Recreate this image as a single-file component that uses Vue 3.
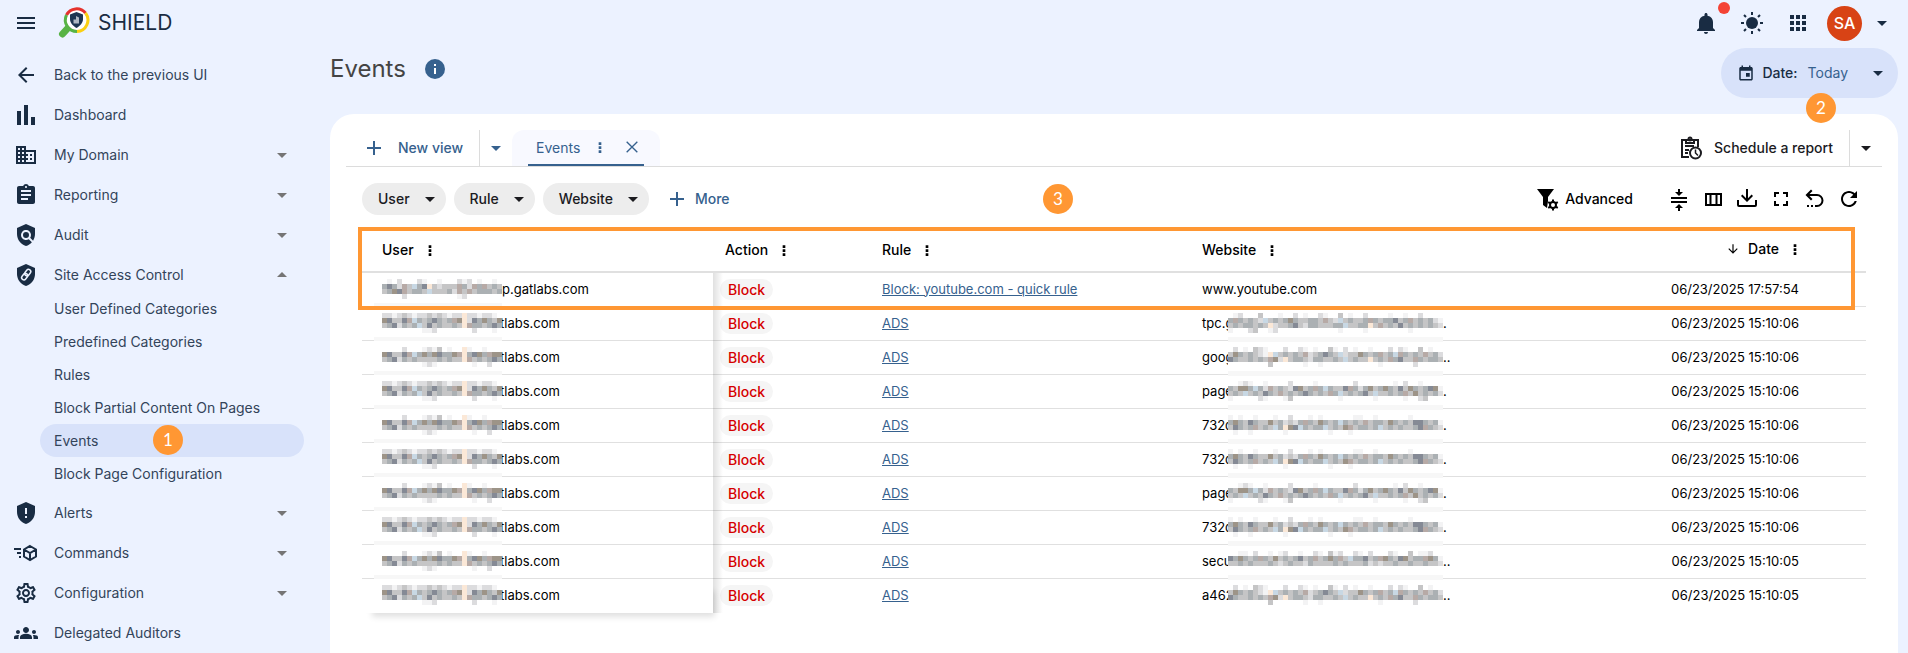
<template>
  <div class="page">
    <header class="topbar">
      <button class="icon-btn menu-btn" aria-label="Menu">
        <svg viewBox="0 0 24 24"><path :d="icons.menu" /></svg>
      </button>
      <a href="#" class="brand">
        <svg class="logo" viewBox="0 0 32 32" fill="none">
          <path d="M10 21L4.5 27" stroke="#57b345" stroke-width="7" stroke-linecap="round" />
          <circle cx="18.5" cy="13" r="11" fill="#fff" />
          <path d="M8.5 8A11.5 11.5 0 0 1 27.5 6" stroke="#e5322d" stroke-width="3" />
          <path d="M27.5 6A11.5 11.5 0 0 1 19 24.5" stroke="#fbd012" stroke-width="3" />
          <path d="M19 24.5A11.5 11.5 0 0 1 8.5 8" stroke="#57b345" stroke-width="3" />
          <path
            d="M18.5 5l6.5 2.5v4.500c0 4-3 7-6.5 9-3.500-2-6.500-5-6.500-9V7.500z"
            fill="#1c3550"
          />
          <path d="M15.500 16.500v-4H18V9l3 1.500v6z" fill="#aeb8c3" />
        </svg>
        <span>SHIELD</span>
      </a>
      <div class="account">
        <button class="icon-btn bell" aria-label="Notifications">
          <svg viewBox="0 0 24 24"><path :d="icons.bell" /></svg>
          <i class="dot"></i>
        </button>
        <button class="icon-btn" aria-label="Theme">
          <svg viewBox="0 0 24 24">
            <circle cx="12" cy="12" r="6" />
            <path
              d="M12 1v3M12 20v3M1 12h3M20 12h3M4 4l2 2M18 18l2 2M4 20l2-2M18 6l2-2"
              stroke="#192c43"
              stroke-width="2"
            />
          </svg>
        </button>
        <button class="icon-btn" aria-label="Apps">
          <svg viewBox="0 0 24 24"><path :d="icons.apps" /></svg>
        </button>
        <button class="profile" aria-label="Account">
          <span class="avatar">SA</span>
          <svg viewBox="0 0 24 24"><path :d="icons.down" /></svg>
        </button>
      </div>
    </header>

    <div class="body">
      <nav class="sidebar">
        <ul>
          <li v-for="item in menu" :key="item.label">
            <a href="#" class="item">
              <svg v-if="item.icon === 'link'" class="item-icon" viewBox="0 0 24 24">
                <path :d="icons.shield" />
                <g fill="none" stroke="#ecf2ff" stroke-width="1.5" transform="rotate(-52 12 11.5)">
                  <rect x="6" y="9.5" width="7" height="4.5" rx="2.25" />
                  <rect x="11" y="9.5" width="7" height="4.5" rx="2.25" />
                </g>
              </svg>
              <svg v-else-if="item.icon === 'commands'" class="item-icon" viewBox="0 0 24 24">
                <g fill="none" stroke="#192c43" stroke-width="2">
                  <path d="M0 8h7M3 12h4M5 16h2" />
                  <path d="M16 5l6 3.5v7L16 19l-6-3.5v-7zM10 8.5l6 3.5 6-3.5M16 12v7" />
                </g>
              </svg>
              <svg v-else class="item-icon" viewBox="0 0 24 24">
                <path fill-rule="evenodd" :d="icons[item.icon]" />
              </svg>
              <span>{{ item.label }}</span>
              <svg v-if="item.arrow" class="item-arrow" viewBox="0 0 24 24">
                <path :d="icons[item.arrow]" />
              </svg>
            </a>
            <ul v-if="item.children" class="sub">
              <li v-for="child in item.children" :key="child">
                <a href="#" :class="{ active: child === 'Events' }">
                  {{ child }}
                  <span v-if="child === 'Events'" class="badge badge-one">1</span>
                </a>
              </li>
            </ul>
          </li>
        </ul>
      </nav>

      <main>
        <div class="heading">
          <h1>Events</h1>
          <svg class="info" viewBox="0 0 20 20">
            <circle cx="10" cy="10" r="10" />
            <path d="M9 5h2v2H9zM9 9h2v6H9z" fill="#fff" />
          </svg>
          <button class="date-btn">
            <svg class="calendar" viewBox="0 0 24 24"><path :d="icons.calendar" /></svg>
            <span>Date:</span>
            <span class="today">Today</span>
            <svg class="caret" viewBox="0 0 24 24"><path :d="icons.down" /></svg>
          </button>
          <span class="badge badge-two">2</span>
        </div>

        <section class="card">
          <div class="tabs">
            <button class="new-view">
              <svg viewBox="0 0 24 24"><path :d="icons.plus" /></svg>
              New view
            </button>
            <button class="split" aria-label="Saved views">
              <svg viewBox="0 0 24 24"><path :d="icons.down" /></svg>
            </button>
            <div class="tab">
              <div class="tab-inner">
                <span>Events</span>
                <button aria-label="Tab options">
                  <svg viewBox="0 0 24 24"><path :d="icons.dots" /></svg>
                </button>
                <button aria-label="Close tab">
                  <svg viewBox="0 0 24 24">
                    <path d="M4 4l16 16M20 4L4 20" stroke="#36618e" stroke-width="2" />
                  </svg>
                </button>
              </div>
            </div>
            <button class="schedule">
              <svg viewBox="0 0 24 24" fill="none" stroke="#1b1b1f" stroke-width="2">
                <path d="M11 21H4V4h16v7M8 4v3h8V4M7 10h9M7 14h4M7 17h3" />
                <circle cx="12" cy="3" r="1.5" />
                <circle cx="17.5" cy="17" r="5.5" fill="#fff" />
                <path d="M17.500 13.500V17l2.500 2.500" stroke-width="1.5" />
              </svg>
              Schedule a report
            </button>
            <button class="split split-dark" aria-label="Report options">
              <svg viewBox="0 0 24 24"><path :d="icons.down" /></svg>
            </button>
          </div>

          <div class="filters">
            <button v-for="chip in chips" :key="chip" class="chip">
              {{ chip }}
              <svg viewBox="0 0 24 24"><path :d="icons.down" /></svg>
            </button>
            <button class="more">
              <svg viewBox="0 0 24 24"><path :d="icons.plus" /></svg>
              More
            </button>
            <div class="tools">
              <button class="advanced">
                <svg viewBox="0 0 24 24">
                  <path d="M2 2h17l-6 8v4l-1 7-4-3v-8z" />
                  <circle cx="18" cy="18" r="5" fill="#fff" />
                  <circle cx="18" cy="18" r="3" fill="none" stroke="#000" stroke-width="2" />
                  <path
                    d="M18 12.500v2M18 21.500v2M13.200 15.200l1.800 1M21 19.800l1.800 1M13.200 20.800l1.800-1M21 16.200l1.800-1"
                    stroke="#000"
                    stroke-width="2"
                  />
                </svg>
                Advanced
              </button>
              <button v-for="tool in tools" :key="tool.name" :aria-label="tool.name">
                <svg viewBox="0 0 24 24"><path fill-rule="evenodd" :d="tool.path" /></svg>
              </button>
            </div>
            <span class="badge badge-three">3</span>
          </div>

          <div class="table-wrap">
            <table>
              <colgroup>
                <col class="col-user" />
                <col class="col-action" />
                <col class="col-rule" />
                <col />
                <col class="col-date" />
              </colgroup>
              <thead>
                <tr>
                  <th v-for="name in columns" :key="name">
                    <span class="th">
                      <svg v-if="name === 'Date'" class="sort" viewBox="0 0 24 24">
                        <path :d="icons.sort" />
                      </svg>
                      {{ name }}
                      <svg class="th-dots" viewBox="0 0 24 24"><path :d="icons.dots" /></svg>
                    </span>
                  </th>
                </tr>
              </thead>
              <tbody>
                <tr v-for="(row, i) in rows" :key="i">
                  <td class="user">
                    <div class="cell">
                      <svg class="mosaic" width="120" height="20" shape-rendering="crispEdges">
                        <rect
                          v-for="b in blocks(userMasks[i === 0 ? 0 : 1 + (i % 2)])"
                          :key="b.key"
                          :x="b.x"
                          :y="b.y"
                          width="5"
                          height="5"
                          :fill="b.fill"
                        />
                      </svg>
                      <span>{{ row.user }}</span>
                    </div>
                  </td>
                  <td><span class="block">Block</span></td>
                  <td><a href="#" class="rule">{{ row.rule }}</a></td>
                  <td :class="{ site: row.tail }">
                    <div class="cell">
                      <span :class="{ lead: row.tail }">{{ row.site }}</span>
                      <svg
                        v-if="row.tail"
                        class="mosaic"
                        width="215"
                        height="20"
                        shape-rendering="crispEdges"
                      >
                        <rect
                          v-for="b in blocks(siteMasks[row.mask])"
                          :key="b.key"
                          :x="b.x"
                          :y="b.y"
                          width="5"
                          height="5"
                          :fill="b.fill"
                        />
                      </svg>
                      <span>{{ row.tail }}</span>
                    </div>
                  </td>
                  <td>{{ row.date }}</td>
                </tr>
              </tbody>
            </table>
            <div class="highlight"></div>
          </div>
        </section>
      </main>
    </div>
  </div>
</template>

<script setup>
const icons = {
  menu: "M3 18h18v-2H3v2zm0-5h18v-2H3v2zm0-7v2h18V6H3z",
  back: "M20 11H7.830l5.590-5.590L12 4l-8 8 8 8 1.410-1.410L7.830 13H20v-2z",
  chart: "M3 8h4v14H3zM10 2h4v20h-4zM17 14h4v8h-4z",
  domain:
    "M12 7V3H2v18h20V7H12zM6 19H4v-2h2v2zm0-4H4v-2h2v2zm0-4H4V9h2v2zm0-4H4V5h2v2zm4 12H8v-2h2v2zm0-4H8v-2h2v2zm0-4H8V9h2v2zm0-4H8V5h2v2zm10 12h-8v-2h2v-2h-2v-2h2v-2h-2V9h8v10zm-2-8h-2v2h2v-2zm0 4h-2v2h2v-2z",
  report:
    "M19 3h-4.180C14.400 1.840 13.300 1 12 1c-1.300 0-2.400.84-2.820 2H5c-1.100 0-2 .9-2 2v14c0 1.100.9 2 2 2h14c1.100 0 2-.9 2-2V5c0-1.100-.9-2-2-2zm-7 0c.55 0 1 .45 1 1s-.45 1-1 1-1-.45-1-1 .45-1 1-1zm2 14H7v-2h7v2zm3-4H7v-2h10v2zm0-4H7V7h10v2z",
  audit:
    "M21 5l-9-4-9 4v6c0 5.550 3.840 10.740 9 12 2.300-.56 4.330-1.900 5.880-3.710l-3.120-3.120c-1.940 1.290-4.580 1.070-6.290-.64-1.950-1.950-1.950-5.120 0-7.070 1.950-1.950 5.120-1.950 7.070 0 1.710 1.710 1.920 4.350.64 6.290l2.900 2.900C20.290 15.690 21 13.380 21 11V5zM12 9a3 3 0 1 0 0 6 3 3 0 0 0 0-6z",
  shield: "M12 1L3 5v6c0 5.550 3.840 10.740 9 12 5.160-1.260 9-6.450 9-12V5l-9-4z",
  alert:
    "M12 1L3 5v6c0 5.550 3.840 10.740 9 12 5.160-1.260 9-6.450 9-12V5l-9-4zM11 7h2v6h-2zM11 15h2v2h-2z",
  settings:
    "M19.430 12.980c.04-.32.07-.64.07-.98 0-.34-.03-.66-.07-.98l2.110-1.650c.19-.15.24-.42.12-.64l-2-3.460c-.09-.16-.26-.25-.44-.25-.06 0-.12.01-.17.03l-2.490 1c-.52-.4-1.080-.73-1.690-.98l-.38-2.650C14.460 2.180 14.250 2 14 2h-4c-.25 0-.46.18-.49.42l-.38 2.650c-.61.25-1.170.59-1.690.98l-2.490-1c-.06-.02-.12-.03-.18-.03-.17 0-.34.09-.43.25l-2 3.460c-.13.22-.07.49.12.64l2.110 1.650c-.04.32-.07.65-.07.98 0 .33.03.66.07.98l-2.110 1.650c-.19.15-.24.42-.12.64l2 3.460c.09.16.26.25.44.25.06 0 .12-.01.17-.03l2.490-1c.52.4 1.080.73 1.690.98l.38 2.650c.03.24.24.42.49.42h4c.25 0 .46-.18.49-.42l.38-2.650c.61-.25 1.170-.59 1.690-.98l2.490 1c.06.02.12.03.18.03.17 0 .34-.09.43-.25l2-3.460c.12-.22.07-.49-.12-.64l-2.110-1.650zm-1.980-1.710c.04.31.05.52.05.73 0 .21-.02.43-.05.73l-.14 1.130.89.7 1.080.84-.7 1.210-1.270-.51-1.040-.42-.9.68c-.43.32-.84.56-1.250.73l-1.060.43-.16 1.130-.2 1.350h-1.400l-.19-1.350-.16-1.130-1.060-.43c-.43-.18-.83-.41-1.230-.71l-.91-.7-1.060.43-1.270.51-.7-1.210 1.080-.84.89-.7-.14-1.130c-.03-.31-.05-.54-.05-.74s.02-.43.05-.73l.14-1.130-.89-.7-1.080-.84.7-1.210 1.270.51 1.040.42.9-.68c.43-.32.84-.56 1.250-.73l1.060-.43.16-1.130.2-1.350h1.390l.19 1.350.16 1.130 1.060.43c.43.18.83.41 1.230.71l.91.7 1.060-.43 1.270-.51.7 1.210-1.070.85-.89.7.14 1.130zM12 8c-2.210 0-4 1.790-4 4s1.790 4 4 4 4-1.790 4-4-1.790-4-4-4zm0 6c-1.100 0-2-.9-2-2s.9-2 2-2 2 .9 2 2-.9 2-2 2z",
  people:
    "M12 12.750c1.630 0 3.070.39 4.240.9 1.080.48 1.760 1.560 1.760 2.730V18H6v-1.610c0-1.180.68-2.260 1.760-2.730 1.170-.52 2.610-.91 4.240-.91zM4 13c1.100 0 2-.9 2-2s-.9-2-2-2-2 .9-2 2 .9 2 2 2zm1.130 1.100c-.37-.06-.74-.1-1.130-.1-.99 0-1.930.21-2.780.58C.48 14.900 0 15.620 0 16.430V18h4.500v-1.610c0-.83.23-1.610.63-2.290zM20 13c1.100 0 2-.9 2-2s-.9-2-2-2-2 .9-2 2 .9 2 2 2zm4 3.430c0-.81-.48-1.530-1.220-1.850-.85-.37-1.790-.58-2.780-.58-.39 0-.76.04-1.130.1.4.68.63 1.460.63 2.290V18H24v-1.570zM12 6c1.660 0 3 1.340 3 3s-1.340 3-3 3-3-1.340-3-3 1.340-3 3-3z",
  bell: "M12 23c1.100 0 2-.9 2-2h-4c0 1.100.89 2 2 2zm7-6v-6c0-3.070-1.900-5.640-5.500-6.320V3.500c0-.83-.67-1.500-1.500-1.500s-1.500.67-1.500 1.500v1.180C6.900 5.360 5 7.920 5 11v6l-2 2v1h18v-1l-2-2z",
  apps: "M4 4h4v4H4zM10 4h4v4h-4zM16 4h4v4h-4zM4 10h4v4H4zM10 10h4v4h-4zM16 10h4v4h-4zM4 16h4v4H4zM10 16h4v4h-4zM16 16h4v4h-4z",
  calendar:
    "M19 4h-1V2h-2v2H8V2H6v2H5c-1.110 0-2 .9-2 2v14c0 1.100.89 2 2 2h14c1.100 0 2-.9 2-2V6c0-1.100-.9-2-2-2zm0 16H5V9h14v11zM12 12h5v5h-5z",
  plus: "M19 13h-6v6h-2v-6H5v-2h6V5h2v6h6v2z",
  dots: "M10 5h4v4h-4zM10 11h4v4h-4zM10 17h4v4h-4z",
  sort: "M20 12l-1.410-1.410L13 16.170V4h-2v12.170l-5.580-5.590L4 12l8 8 8-8z",
  down: "M7 10l5 5 5-5z",
  up: "M7 14l5-5 5 5z",
};

const menu = [
  { icon: "back", label: "Back to the previous UI" },
  { icon: "chart", label: "Dashboard" },
  { icon: "domain", label: "My Domain", arrow: "down" },
  { icon: "report", label: "Reporting", arrow: "down" },
  { icon: "audit", label: "Audit", arrow: "down" },
  {
    icon: "link",
    label: "Site Access Control",
    arrow: "up",
    children: [
      "User Defined Categories",
      "Predefined Categories",
      "Rules",
      "Block Partial Content On Pages",
      "Events",
      "Block Page Configuration",
    ],
  },
  { icon: "alert", label: "Alerts", arrow: "down" },
  { icon: "commands", label: "Commands", arrow: "down" },
  { icon: "settings", label: "Configuration", arrow: "down" },
  { icon: "people", label: "Delegated Auditors" },
];

const chips = ["User", "Rule", "Website"];

const tools = [
  {
    name: "Density",
    path: "M4 10h16v2H4zM4 14h16v2H4zM11 2h2v3h3l-4 4-4-4h3zM11 24h2v-3h3l-4-4-4 4h3z",
  },
  {
    name: "Columns",
    path: "M4 6h17v13H4zM6 8v9h2.500V8zM10.500 8v9h4V8zM16.500 8v9H19V8z",
  },
  {
    name: "Download",
    path: "M11 2h2v9.200l3.600-3.600L18 9l-6 6-6-6 1.400-1.400 3.600 3.600zM2 13h2v5h16v-5h2v5a2 2 0 0 1-2 2H4a2 2 0 0 1-2-2z",
  },
  {
    name: "Fullscreen",
    path: "M5 5h5v2H7v3H5zM14 5h5v5h-2V7h-3zM5 14h2v3h3v2H5zM17 14h2v5h-5v-2h3z",
  },
  {
    name: "Undo",
    path: "M8 2.500L9.500 4 6.500 7H14a6.500 6.500 0 0 1 0 13h-2v-2h2a4.500 4.500 0 0 0 0-9H6.500l3 3L8 13.500 2.500 8zM4 18h2v2H4zM8 18h2v2H8z",
  },
  {
    name: "Refresh",
    path: "M17.650 6.350C16.200 4.900 14.210 4 12 4c-4.420 0-7.990 3.580-7.990 8s3.570 8 7.990 8c3.730 0 6.840-2.550 7.730-6h-2.080c-.82 2.330-3.040 4-5.650 4-3.310 0-6-2.690-6-6s2.690-6 6-6c1.660 0 3.140.69 4.220 1.780L13 11h7V4l-2.350 2.350z",
  },
];

const columns = ["User", "Action", "Rule", "Website", "Date"];

const early = "06/23/2025 15:10:05";
const late = "06/23/2025 15:10:06";

const rows = [
  {
    user: "p.gatlabs.com",
    rule: "Block: youtube.com - quick rule",
    site: "www.youtube.com",
    date: "06/23/2025 17:57:54",
  },
  { user: "tlabs.com", rule: "ADS", site: "tpc.g", tail: ".", mask: 0, date: late },
  { user: "tlabs.com", rule: "ADS", site: "goog", tail: "..", mask: 1, date: late },
  { user: "tlabs.com", rule: "ADS", site: "page", tail: ".", mask: 2, date: late },
  { user: "tlabs.com", rule: "ADS", site: "732d", tail: ".", mask: 3, date: late },
  { user: "tlabs.com", rule: "ADS", site: "732d", tail: ".", mask: 3, date: late },
  { user: "tlabs.com", rule: "ADS", site: "page", tail: ".", mask: 2, date: late },
  { user: "tlabs.com", rule: "ADS", site: "732d", tail: ".", mask: 3, date: late },
  { user: "tlabs.com", rule: "ADS", site: "secu", tail: "..", mask: 4, date: early },
  { user: "tlabs.com", rule: "ADS", site: "a462", tail: "..", mask: 1, date: early },
];

// one digit per 5px block, 0 stays empty
const palette = [
  "",
  "#f3f3f4",
  "#dcdcde",
  "#c5c5c6",
  "#abb0b3",
  "#858a95",
  "#9d9488",
  "#fbe8d7",
  "#c8d8e4",
  "#b7aaa6",
];

const userMasks = [
  ["010200021001000212010010", "454293845732333942949343", "346593443833342939344434", "000020000000000120000000"],
  ["000020001213010071001000", "653359846465446974564966", "345243433334343379343454", "000000001210000000100200"],
  ["221232122323212272212210", "653359843454349672546436", "345243483534334379443454", "000000001120000000200010"],
];

const siteMasks = [
  [
    "0120003000100201002100301002000010010020000",
    "4943432834346433443932834334943445349343421",
    "3434434372334532443334483344739343534343432",
    "1000230012000000000000100001000000001000000",
  ],
  [
    "0201032100020021010031020100100020210030100",
    "3643432178343439234543823364349348943439342",
    "5433434396273443244334383433734394533943443",
    "0000000030000001001000000000001000000200000",
  ],
  [
    "0012100100002000010000000200000001020010000",
    "4366484293432563494843359424634643536434561",
    "3438343543934345434394834345383343493634342",
    "1000002100013000000000100000010000010023000",
  ],
  [
    "1010010001002000101000000110010000001000000",
    "4643543363423249436434843439344364343554341",
    "3543493438476584344834369344348343433459432",
    "0100100000010000000010001000000000000000000",
  ],
  [
    "0011020010120010021031200210200021003011200",
    "5464349436343453493464938445349643563449641",
    "3343433343234332433334343334232334334334332",
    "0000000000000000000000000000000000000000000",
  ],
];

const blocks = (mask) =>
  mask.flatMap((line, y) =>
    [...line]
      .map((n, x) => ({ key: `${x}-${y}`, x: x * 5, y: y * 5, fill: palette[n] }))
      .filter((b) => b.fill)
  );
</script>

<style>
body {
  margin: 0;
  background-color: #ecf2ff;
}
</style>

<style scoped>
.page {
  display: flex;
  flex-direction: column;
  min-height: 100vh;
  font-family: Inter, "Liberation Sans", sans-serif;
  font-size: 14px;
  line-height: 20px;
  color: #192c43;
  background-color: #ecf2ff;
}

ul {
  margin: 0;
  padding: 0;
  list-style: none;
}

a {
  color: inherit;
  text-decoration: none;
}

svg {
  width: 24px;
  height: 24px;
  flex: none;
  fill: currentColor;
}

svg[fill="none"] {
  fill: none;
}

button {
  display: flex;
  align-items: center;
  padding: 0;
  border: 0;
  background: none;
  color: inherit;
  font: inherit;
  cursor: pointer;
}

.topbar {
  display: flex;
  align-items: center;
  height: 46px;
  padding: 0 14px;
}

.brand {
  display: flex;
  align-items: center;
  gap: 8px;
  margin-left: 20px;
  font-size: 21px;
  line-height: 24px;
}

.brand .logo {
  width: 32px;
  height: 32px;
}

.account {
  display: flex;
  align-items: center;
  gap: 22px;
  margin-left: auto;
}

.bell {
  position: relative;
}

.dot {
  position: absolute;
  top: -9px;
  right: -12px;
  width: 12px;
  height: 12px;
  border-radius: 50%;
  background-color: #f44336;
}

.profile {
  gap: 8px;
  margin-left: -5px;
}

.avatar {
  width: 35px;
  border-radius: 50%;
  background-color: #d84315;
  color: #fff;
  font-size: 16px;
  font-weight: 500;
  line-height: 35px;
  text-align: center;
}

.body {
  display: flex;
  flex: 1;
}

.sidebar {
  flex: 0 0 330px;
  padding-top: 10px;
}

.item {
  display: flex;
  align-items: center;
  height: 38px;
  margin-bottom: 2px;
  padding: 0 36px 0 14px;
}

.item span {
  margin-left: 16px;
  color: #33445a;
}

.item-arrow {
  margin-left: auto;
  color: #757575;
}

.sub {
  margin: -4px 26px 4px 40px;
}

.sub a {
  position: relative;
  display: block;
  padding-left: 14px;
  border-radius: 17px;
  color: #33445a;
  line-height: 33px;
}

.sub .active {
  background-color: #d8e2fa;
}

.badge {
  position: absolute;
  width: 30px;
  border-radius: 50%;
  background-color: #ff9733;
  color: #fff;
  font-family: Lato, "Liberation Sans", sans-serif;
  font-size: 17px;
  line-height: 30px;
  text-align: center;
}

.badge-one {
  top: 1px;
  left: 113px;
}

.badge-two {
  right: 62px;
  bottom: -9px;
}

.badge-three {
  top: 17px;
  left: 697px;
}

main {
  display: flex;
  flex: 1;
  flex-direction: column;
  min-width: 0;
  padding-right: 10px;
}

.heading {
  position: relative;
  display: flex;
  align-items: center;
  padding: 2px 0 16px;
}

h1 {
  margin: 0;
  color: #444;
  font-size: 24px;
  font-weight: 400;
  line-height: 32px;
}

.heading h1,
.info {
  margin-bottom: 8px;
}

.info {
  width: 20px;
  height: 20px;
  margin-left: 19px;
  fill: #36618e;
}

.date-btn {
  height: 50px;
  margin-left: auto;
  padding: 0 8px 0 16px;
  border-radius: 25px;
  background-color: #d8e2fa;
  font-weight: 500;
}

.calendar {
  width: 18px;
  height: 18px;
  margin-right: 7px;
}

.today {
  margin: 0 18px 0 10px;
  color: #36618e;
  font-weight: 400;
}

.card {
  flex: 1;
  padding: 16px 16px 40px;
  border-radius: 24px 24px 0 0;
  background-color: #fff;
}

.tabs {
  display: flex;
  height: 36px;
  border-bottom: 1px solid #dcdcdc;
}

.new-view {
  gap: 12px;
  padding: 0 16px;
  color: #36618e;
  font-weight: 500;
}

.split {
  padding: 0 4px;
  border-left: 1px solid #dcdcdc;
  color: #36618e;
}

.tab {
  padding: 0 16px;
  border-radius: 12px 12px 0 0;
  background-color: #f8f9ff;
  color: #36618e;
}

.tab-inner {
  display: flex;
  align-items: center;
  gap: 12px;
  height: 34px;
  padding: 0 4px 0 8px;
  border-bottom: 2px solid #36618e;
}

.tab-inner span {
  padding-top: 2px;
}

.tab-inner svg {
  width: 16px;
  height: 16px;
}

.tab-inner button + button {
  margin-left: 4px;
}

.schedule {
  gap: 12px;
  margin-left: auto;
  padding-right: 16px;
  color: #1b1b1f;
  font-weight: 500;
}

.split-dark {
  color: #1b1b1f;
}

.filters {
  position: relative;
  display: flex;
  align-items: center;
  gap: 8px;
  padding: 16px 21px 14px 16px;
}

.chip {
  gap: 8px;
  height: 32px;
  padding: 0 4px 0 16px;
  border-radius: 16px;
  background-color: #ededed;
  color: #1b1b1f;
  font-weight: 500;
}

.more {
  gap: 6px;
  padding-left: 8px;
  color: #36618e;
  font-weight: 500;
}

.tools {
  display: flex;
  gap: 10px;
  margin-left: auto;
  color: #000;
}

.advanced {
  gap: 6px;
  margin-right: 24px;
  font-weight: 500;
}

.table-wrap {
  position: relative;
  margin: 0 16px;
}

table {
  width: 100%;
  border-collapse: separate;
  border-spacing: 0;
  table-layout: fixed;
  color: #000;
}

.col-user {
  width: 351px;
}

.col-action {
  width: 149px;
}

.col-rule {
  width: 320px;
}

.col-date {
  width: 300px;
}

th {
  height: 42px;
  padding: 0 20px;
  border-bottom: 2px solid #e0e0e0;
  font-weight: 500;
  text-align: left;
}

.th {
  display: inline-flex;
  align-items: center;
  gap: 8px;
}

.th-dots {
  width: 16px;
  height: 16px;
}

.sort {
  width: 14px;
  height: 14px;
}

th:nth-child(2) {
  padding-left: 12px;
}

th:last-child,
td:last-child {
  padding-right: 67px;
  text-align: right;
}

th:last-child {
  padding-right: 63px;
}

td {
  position: relative;
  height: 31px;
  padding: 0 20px 2px;
  border-bottom: 1px solid #e0e0e0;
  font-size: 13px;
  line-height: 20px;
  white-space: nowrap;
}

tr:last-child td {
  border-bottom-color: transparent;
}

td:nth-child(2) {
  height: 33px;
  padding: 0 0 0 7px;
}

.cell {
  display: flex;
  align-items: center;
}

/* covers the first letters next to it */
svg.mosaic {
  position: relative;
  width: auto;
  height: 20px;
  background-color: #fff;
}

tr + tr .user .mosaic {
  margin-right: -2px;
}

.user {
  z-index: 1;
  background-color: #fff;
}

.user::before {
  content: "";
  position: absolute;
  top: 0;
  bottom: -1px;
  left: 100%;
  width: 10px;
  background: linear-gradient(to right, rgba(0, 0, 0, 0.12), transparent);
}

tr:last-child .user {
  box-shadow: 6px 8px 6px -4px rgba(0, 0, 0, 0.12);
}

/* the pixelated strip also runs over the row lines */
.user::after,
.site::after {
  content: "";
  position: absolute;
  bottom: -2px;
  left: 12px;
  width: 128px;
  height: 5px;
  background-color: #f7f7f7;
}

.site::after {
  left: 46px;
  width: 215px;
}

tr:last-child td::after {
  content: none;
}

.lead {
  width: 26px;
}

.block {
  display: inline-block;
  padding: 0 8px;
  border-radius: 11px;
  background-color: #f5f5f5;
  color: #d50000;
  font-size: 14px;
  font-weight: 500;
  line-height: 21px;
}

.rule {
  color: #36618e;
  text-decoration: underline;
}

.highlight {
  position: absolute;
  z-index: 2;
  top: -2px;
  right: 11px;
  left: -4px;
  box-sizing: border-box;
  height: 83px;
  border: 4px solid #ff9733;
  pointer-events: none;
}
</style>
